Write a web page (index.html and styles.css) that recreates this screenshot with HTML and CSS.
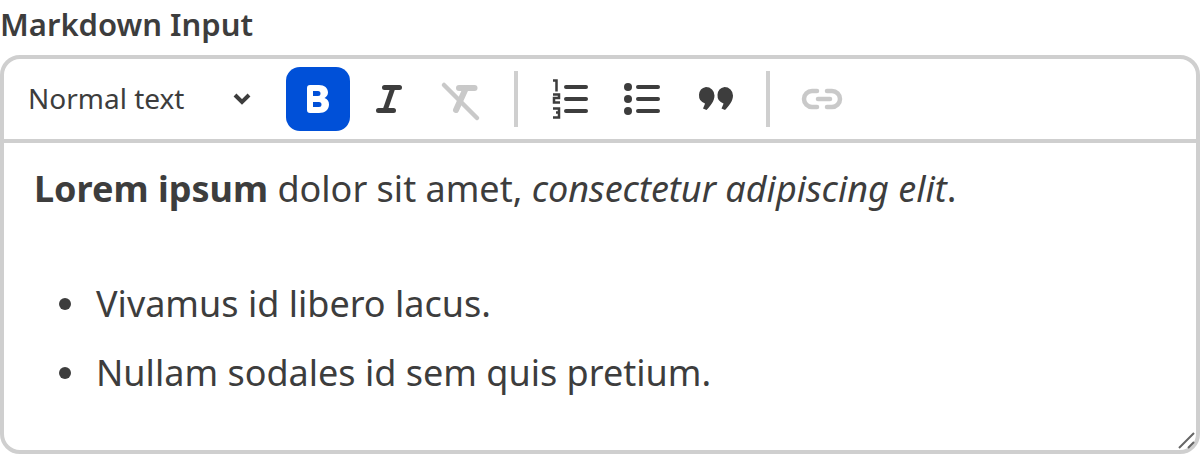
FILE: index.html
```html
<!DOCTYPE html>
<html lang="en">
<head>
    <meta charset="UTF-8">
    <title>Markdown Input</title>
    <link rel="stylesheet" href="styles.css">
</head>
<body>
    <label class="field-label">Markdown Input</label>
    <div class="editor">
        <!-- Toolbar -->
        <div class="toolbar">
            <div class="block-select">
                <span class="block-name">Normal text</span>
                <svg class="chevron" width="20" height="14" viewBox="0 0 20 14"><path d="M3 3l7 7 7-7" fill="none" stroke="#3d3d3d" stroke-width="4"/></svg>
            </div>
            <div class="tool-group">
                <button class="tool tool-active">
                    <svg width="64" height="64" viewBox="0 0 64 64"><path fill-rule="evenodd" fill="#fff" d="M24 18h9c5.500 0 9 3 9 7.500 0 2.500-1.500 4.500-3.500 5.500 3 1 4.500 3.500 4.500 6.500 0 5-4 8.500-10 8.500h-9a3 3 0 0 1-3-3V21a3 3 0 0 1 3-3zM27 24v5h5a2.500 2.500 0 0 0 0-5zM27 35v5h6a2.500 2.500 0 0 0 0-5z"/></svg>
                </button>
                <button class="tool">
                    <svg width="64" height="64" viewBox="0 0 64 64"><path d="M26.500 20.500h15M20.500 43.500h15" fill="none" stroke="#3d3d3d" stroke-width="5" stroke-linecap="round"/><path d="M35 20.500L27 43.500" stroke="#3d3d3d" stroke-width="5"/></svg>
                </button>
                <button class="tool">
                    <svg width="64" height="64" viewBox="0 0 64 64"><path d="M29 21h15.500" fill="none" stroke="#c9c9c9" stroke-width="6" stroke-linecap="round"/><path d="M36 21L26 43" fill="none" stroke="#c9c9c9" stroke-width="6" stroke-linecap="round"/><path d="M14 18l33 33" fill="none" stroke="#c9c9c9" stroke-width="4.500" stroke-linecap="round"/></svg>
                </button>
            </div>
            <div class="divider"></div>
            <div class="tool-group">
                <button class="tool">
                    <svg width="64" height="64" viewBox="0 0 64 64"><path d="M28 20h20M28 32h20M28 44h20" stroke="#3d3d3d" stroke-width="4" stroke-linecap="round"/><path d="M15 13.500h3.500v11M15 27.500h6v3.500h-5v4.500h6M15 41.500h6v4h-3 3v5h-6" fill="none" stroke="#3d3d3d" stroke-width="2.500"/></svg>
                </button>
                <button class="tool">
                    <svg width="64" height="64" viewBox="0 0 64 64"><circle cx="18" cy="20" r="4" fill="#3d3d3d"/><circle cx="18" cy="32" r="4" fill="#3d3d3d"/><circle cx="18" cy="44" r="4" fill="#3d3d3d"/><path d="M28 20h20M28 32h20M28 44h20" stroke="#3d3d3d" stroke-width="4" stroke-linecap="round"/></svg>
                </button>
                <button class="tool">
                    <svg width="64" height="64" viewBox="0 0 64 64"><path fill="#3d3d3d" d="M24 20a8.500 8.500 0 0 1 8.500 8.500c0 5.500-4 10.500-8 14.500l-3.500-1.500c1-2 1.500-3.500 2-5A8.500 8.500 0 0 1 24 20z"/><path fill="#3d3d3d" d="M42.500 20a8.500 8.500 0 0 1 8.500 8.500c0 5.500-4 10.500-8 14.500l-3.500-1.500c1-2 1.500-3.500 2-5A8.500 8.500 0 0 1 42.500 20z"/></svg>
                </button>
            </div>
            <div class="divider"></div>
            <button class="tool">
                <svg width="64" height="64" viewBox="0 0 64 64"><path d="M27 24h-5a8 8 0 0 0 0 16h5M37 24h5a8 8 0 0 1 0 16h-5M28 32h12" fill="none" stroke="#c9c9c9" stroke-width="4.500" stroke-linecap="round"/></svg>
            </button>
        </div>

        <!-- Content -->
        <div class="content">
            <p><strong>Lorem ipsum</strong> dolor sit amet, <em>consectetur adipiscing elit</em>.</p>
            <ul>
                <li>Vivamus id libero lacus.</li>
                <li>Nullam sodales id sem quis pretium.</li>
            </ul>
            <svg class="resize-grip" width="20" height="20" viewBox="0 0 20 20"><path d="M3 18L18 3M12 18l6-6" stroke="#666" stroke-width="2"/></svg>
        </div>
    </div>
</body>
</html>
```

FILE: styles.css
```css
body {
    margin: 0;
    font-family: "Noto Sans", sans-serif;
    color: #3d3d3d;
    background: #fff;
    overflow: hidden;
}

.field-label {
    display: block;
    height: 55px;
    font-size: 31px;
    font-weight: 600;
    line-height: 48px;
}

/* Editor box */
.editor {
    box-sizing: border-box;
    height: 399px;
    border: 4px solid #cfcfcf;
    border-radius: 20px;
    display: flex;
    flex-direction: column;
}

/* Toolbar */
.toolbar {
    height: 80px;
    display: flex;
    align-items: center;
    border-bottom: 4px solid #cfcfcf;
}

.block-select {
    display: flex;
    align-items: center;
    justify-content: space-between;
    width: 224px;
    margin-left: 24px;
    margin-right: 34px;
    font-size: 28px;
}

.block-name {
    margin-top: -2px;
}

.chevron {
    display: block;
}

.tool-group {
    display: flex;
    gap: 8px;
}

.tool {
    width: 64px;
    height: 64px;
    padding: 0;
    border: none;
    border-radius: 14px;
    background: none;
    display: flex;
    align-items: center;
    justify-content: center;
}

.tool-active {
    background: #0050d8;
}

.divider {
    width: 4px;
    height: 56px;
    margin: 0 20px;
    background: #cfcfcf;
}

/* Content */
.content {
    position: relative;
    flex: 1;
    padding: 21px 30px;
    font-size: 36px;
    line-height: 50px;
}

.content p {
    margin: 0 0 65px;
}

.content ul {
    margin: 0;
    padding-left: 25px;
    list-style: none;
}

.content li {
    display: flex;
    align-items: center;
    gap: 25px;
    margin-bottom: 19px;
}

.content li::before {
    content: "";
    width: 12px;
    height: 12px;
    border-radius: 50%;
    background: #3d3d3d;
}

.resize-grip {
    position: absolute;
    right: 0;
    bottom: 0;
}
```
